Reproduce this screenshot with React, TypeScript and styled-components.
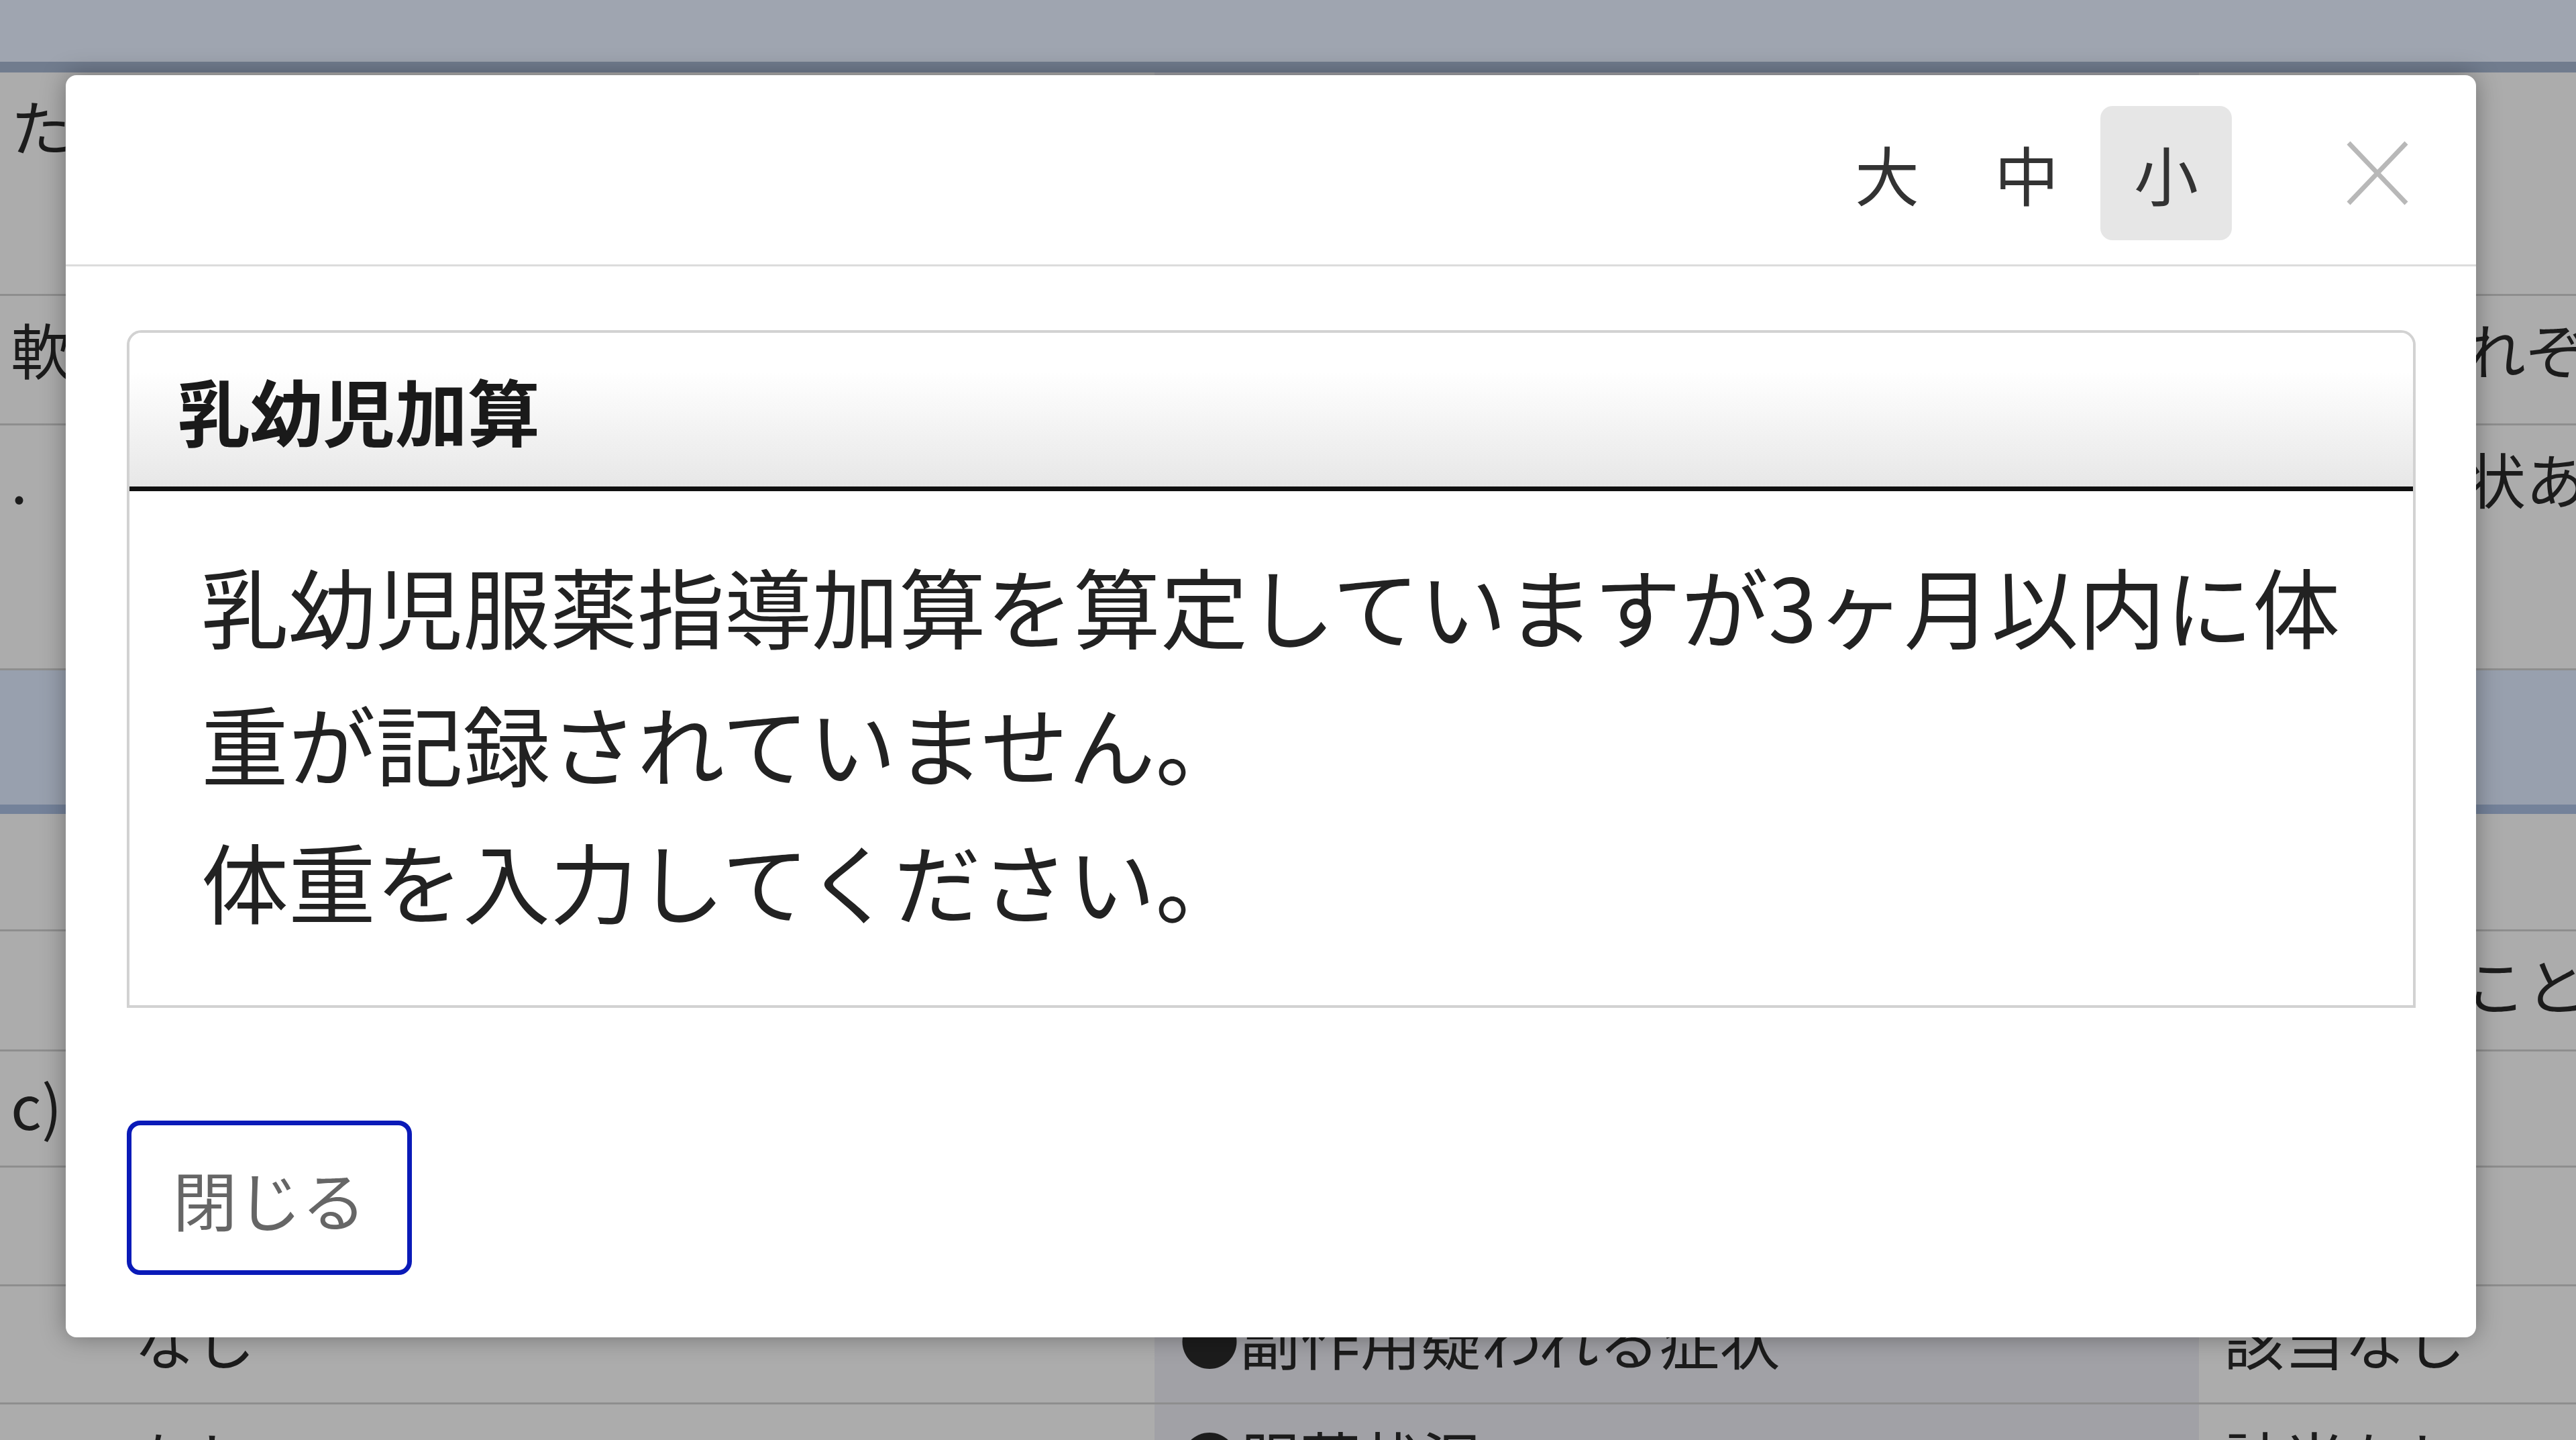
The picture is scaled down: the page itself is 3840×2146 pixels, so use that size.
import React from "react";
import styled, { createGlobalStyle } from "styled-components";

const GlobalStyle = createGlobalStyle`
  html, body { margin: 0; padding: 0; }
  body {
    font-family: "Noto Sans CJK JP", "Noto Sans", sans-serif;
    overflow: hidden;
  }
  * { box-sizing: border-box; }
`;

const Screen = styled.div`
  position: relative;
  width: 3840px;
  height: 2146px;
  overflow: hidden;
  background: #acacac;
`;

const TopBar = styled.div`
  height: 108px;
  background: #9fa5b0;
  border-bottom: 16px solid #717c8e;
`;

const Table = styled.div`
  display: flex;
  flex-direction: column;
`;

const Row = styled.div<{ $h: number; $selected?: boolean }>`
  display: grid;
  grid-template-columns: 163px 1558px 1557px 1fr;
  height: ${(p) => p.$h}px;
  flex-shrink: 0;
  background: ${(p) => (p.$selected ? "#98a0ae" : "#acacac")};
  border-bottom: ${(p) => (p.$selected ? "14px solid #74829a" : "3px solid #8e8e8e")};
`;

const Cell = styled.div<{ $first?: boolean; $shade?: boolean }>`
  padding: 24px 0 0 ${(p) => (p.$first ? "16px" : "37px")};
  font-size: 90px;
  line-height: 108px;
  white-space: nowrap;
  overflow: hidden;
  color: #1c1c1c;
  background: ${(p) => (p.$shade ? "#a1a1a6" : "transparent")};
`;

const Modal = styled.div`
  position: absolute;
  left: 98px;
  top: 112px;
  width: 3593px;
  background: #ffffff;
  border-radius: 16px;
  box-shadow: 0 0 36px rgba(0, 0, 0, 0.35);
  display: flex;
  flex-direction: column;
`;

const ModalHeader = styled.div`
  display: flex;
  align-items: center;
  justify-content: flex-end;
  padding: 46px 72px 36px 0;
  border-bottom: 3px solid #dcdcdc;
`;

const SizeGroup = styled.div`
  display: flex;
  gap: 12px;
`;

const SizeButton = styled.button<{ $active?: boolean }>`
  width: 196px;
  height: 200px;
  border: none;
  border-radius: 18px;
  padding: 0;
  background: ${(p) => (p.$active ? "#e6e6e6" : "transparent")};
  font-family: inherit;
  font-size: 96px;
  line-height: 1;
  color: #333333;
  display: flex;
  align-items: center;
  justify-content: center;
`;

const CloseButton = styled.button`
  margin-left: 142px;
  width: 150px;
  height: 200px;
  border: none;
  padding: 0;
  background: transparent;
  display: flex;
  align-items: center;
  justify-content: center;
`;

const ModalBody = styled.div`
  display: flex;
  flex-direction: column;
  align-items: flex-start;
  padding: 95px 90px 93px 91px;
`;

const Card = styled.section`
  align-self: stretch;
  border: 4px solid #d2d2d2;
  border-radius: 22px 22px 0 0;
  overflow: hidden;
`;

const CardHeader = styled.header`
  height: 236px;
  display: flex;
  align-items: center;
  padding: 0 72px;
  background: linear-gradient(#ffffff 25%, #e7e7e7 100%);
  border-bottom: 7px solid #111111;
`;

const CardTitle = styled.h2`
  margin: 0;
  font-size: 108px;
  font-weight: 700;
  color: #1a1a1a;
  line-height: 1.2;
`;

const CardBody = styled.div`
  padding: 66px 80px 85px 107px;
  font-size: 130px;
  line-height: 205px;
  color: #222222;
`;

const CloseAction = styled.button`
  margin-top: 168px;
  width: 425px;
  height: 230px;
  border: 7px solid #0a1ab8;
  border-radius: 20px;
  background: #ffffff;
  padding: 0;
  font-family: inherit;
  font-size: 96px;
  color: #666666;
  display: flex;
  align-items: center;
  justify-content: center;
`;

const CloseIcon = () => (
  <svg width="92" height="96" viewBox="0 0 92 96">
    <line x1="3" y1="3" x2="89" y2="93" stroke="#b8b8b8" strokeWidth="7" />
    <line x1="89" y1="3" x2="3" y2="93" stroke="#b8b8b8" strokeWidth="7" />
  </svg>
);

type RowData = {
  h: number;
  selected?: boolean;
  cells: [string, string, string, string];
};

const rows: RowData[] = [
  { h: 333, cells: ["ただし", "", "", ""] },
  { h: 193, cells: ["軟膏", "", "", "各薬剤それぞれ"] },
  { h: 365, cells: [".", "", "", "副作用症状あり"] },
  { h: 214, selected: true, cells: ["", "", "", ""] },
  { h: 175, cells: ["", "", "", ""] },
  { h: 179, cells: ["", "", "", "服用することを"] },
  { h: 173, cells: ["c)", "", "", ""] },
  { h: 177, cells: ["", "", "", ""] },
  { h: 176, cells: ["", "なし", "●副作用疑われる症状", "該当なし"] },
  { h: 200, cells: ["", "なし", "●服薬状況", "該当なし"] },
];

export default function App() {
  return (
    <>
      <GlobalStyle />
      <Screen>
        <TopBar />
        <Table>
          {rows.map((r, i) => (
            <Row key={i} $h={r.h} $selected={r.selected}>
              <Cell $first>{r.cells[0]}</Cell>
              <Cell>{r.cells[1]}</Cell>
              <Cell $shade={!r.selected}>{r.cells[2]}</Cell>
              <Cell>{r.cells[3]}</Cell>
            </Row>
          ))}
        </Table>

        <Modal role="dialog">
          <ModalHeader>
            <SizeGroup>
              <SizeButton>大</SizeButton>
              <SizeButton>中</SizeButton>
              <SizeButton $active>小</SizeButton>
            </SizeGroup>
            <CloseButton aria-label="close">
              <CloseIcon />
            </CloseButton>
          </ModalHeader>
          <ModalBody>
            <Card>
              <CardHeader>
                <CardTitle>乳幼児加算</CardTitle>
              </CardHeader>
              <CardBody>
                乳幼児服薬指導加算を算定していますが3ヶ月以内に体重が記録されていません。
                <br />
                体重を入力してください。
              </CardBody>
            </Card>
            <CloseAction>閉じる</CloseAction>
          </ModalBody>
        </Modal>
      </Screen>
    </>
  );
}
